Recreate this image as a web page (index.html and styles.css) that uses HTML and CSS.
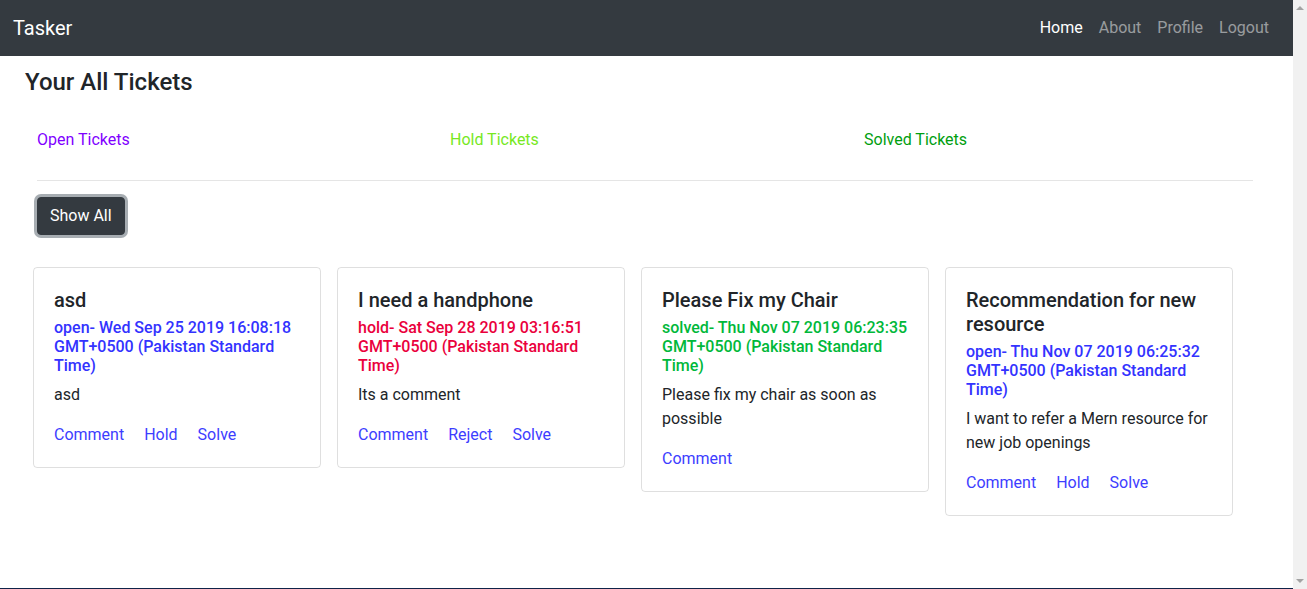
FILE: index.html
```html
<!DOCTYPE html>
<html lang="en">
<head>
<meta charset="utf-8">
<title>Tasker</title>
<link rel="stylesheet" href="styles.css">
</head>
<body>
<div class="page">
  <nav class="navbar">
    <a class="brand" href="#">Tasker</a>
    <ul class="nav">
      <li><a class="nav-link active" href="#">Home</a></li>
      <li><a class="nav-link" href="#">About</a></li>
      <li><a class="nav-link" href="#">Profile</a></li>
      <li><a class="nav-link" href="#">Logout</a></li>
    </ul>
  </nav>
  <main class="content">
    <h4 class="page-title">Your All Tickets</h4>
    <div class="filters">
      <a class="filter open" href="#">Open Tickets</a>
      <a class="filter hold" href="#">Hold Tickets</a>
      <a class="filter solved" href="#">Solved Tickets</a>
    </div>
    <hr class="divider">
    <button class="btn-dark" type="button">Show All</button>
    <div class="cards">
      <div class="card">
        <h5 class="card-title">asd</h5>
        <h6 class="card-subtitle st-open">open- Wed Sep 25 2019 16:08:18 GMT+0500 (Pakistan Standard Time)</h6>
        <p class="card-text">asd</p>
        <div class="card-links"><a href="#">Comment</a><a href="#">Hold</a><a href="#">Solve</a></div>
      </div>
      <div class="card">
        <h5 class="card-title">I need a handphone</h5>
        <h6 class="card-subtitle st-hold">hold- Sat Sep 28 2019 03:16:51 GMT+0500 (Pakistan Standard Time)</h6>
        <p class="card-text">Its a comment</p>
        <div class="card-links"><a href="#">Comment</a><a href="#">Reject</a><a href="#">Solve</a></div>
      </div>
      <div class="card">
        <h5 class="card-title">Please Fix my Chair</h5>
        <h6 class="card-subtitle st-solved">solved- Thu Nov 07 2019 06:23:35 GMT+0500 (Pakistan Standard Time)</h6>
        <p class="card-text">Please fix my chair as soon as possible</p>
        <div class="card-links"><a href="#">Comment</a></div>
      </div>
      <div class="card">
        <h5 class="card-title">Recommendation for new resource</h5>
        <h6 class="card-subtitle st-open">open- Thu Nov 07 2019 06:25:32 GMT+0500 (Pakistan Standard Time)</h6>
        <p class="card-text">I want to refer a Mern resource for new job openings</p>
        <div class="card-links"><a href="#">Comment</a><a href="#">Hold</a><a href="#">Solve</a></div>
      </div>
    </div>
  </main>
  <div class="footer-edge"></div>
</div>
<div class="scrollbar">
  <span class="arrow up"></span>
  <span class="arrow down"></span>
</div>
</body>
</html>
```
FILE: styles.css
```css
* { box-sizing: border-box; }
html, body { margin: 0; padding: 0; height: 100%; overflow: hidden; }
body {
  font-family: Roboto, "Liberation Sans", sans-serif;
  font-size: 16px;
  line-height: 1.5;
  color: #212529;
  background: #fff;
}
a { text-decoration: none; }
.page {
  width: 1293px;
  height: 589px;
  display: flex;
  flex-direction: column;
}
.navbar {
  height: 56px;
  flex: none;
  background: #343a40;
  display: flex;
  align-items: center;
  justify-content: space-between;
  padding: 0 16px 0 13px;
}
.brand {
  color: #fff;
  font-size: 20px;
  line-height: 30px;
}
.nav {
  list-style: none;
  margin: 0;
  padding: 0;
  display: flex;
}
.nav-link {
  display: block;
  padding: 8px;
  color: rgba(255,255,255,.5);
  line-height: 24px;
}
.nav-link.active { color: #fff; }

.content {
  flex: 1;
  padding: 0 0 0 25px;
}
.page-title {
  margin: 9px 0 0;
  font-size: 24px;
  font-weight: 500;
  line-height: 34px;
}
.filters {
  display: grid;
  grid-template-columns: 413px 414px 414px;
  padding-left: 12px;
  margin-top: 30px;
  line-height: 22px;
}
.filter.open { color: #7f00ff; }
.filter.hold { color: #77e81f; }
.filter.solved { color: #009e0f; }
.divider {
  margin: 29px 40px 0 12px;
  border: 0;
  border-top: 1px solid rgba(0,0,0,.1);
}
.btn-dark {
  display: block;
  margin: 16px 0 0 12px;
  font-family: inherit;
  font-size: 16px;
  line-height: 24px;
  padding: 6px 12px;
  color: #fff;
  background: #343a40;
  border: 1px solid #343a40;
  border-radius: 4px;
  box-shadow: 0 0 0 3px rgba(130,138,145,.7);
}
.cards {
  display: flex;
  align-items: flex-start;
  gap: 16px;
  margin: 32px 0 0 8px;
}
.card {
  width: 288px;
  border: 1px solid rgba(0,0,0,.125);
  border-radius: 4px;
  padding: 20px;
}
.card-title {
  margin: 0 0 12px;
  font-size: 20px;
  font-weight: 500;
  line-height: 1.2;
}
.card-subtitle {
  margin: -6px 0 7px;
  font-size: 16px;
  font-weight: 500;
  line-height: 1.2;
}
.st-open { color: #3333ff; }
.st-hold { color: #ea003c; }
.st-solved { color: #00b83a; }
.card-text { margin: 0 0 16px; }
.card-links { display: flex; gap: 20px; }
.card-links a { color: #3d3dff; }
.footer-edge {
  height: 1px;
  flex: none;
  background: #0f2349;
}
.scrollbar {
  position: fixed;
  top: 0;
  right: 0;
  width: 14px;
  height: 589px;
  background: #f1f1f1;
}
.arrow {
  position: absolute;
  left: 3px;
  width: 0;
  height: 0;
  border-left: 4px solid transparent;
  border-right: 4px solid transparent;
}
.arrow.up { top: 6px; border-bottom: 4px solid #a3a3a3; }
.arrow.down { bottom: 6px; border-top: 4px solid #a3a3a3; }
```
